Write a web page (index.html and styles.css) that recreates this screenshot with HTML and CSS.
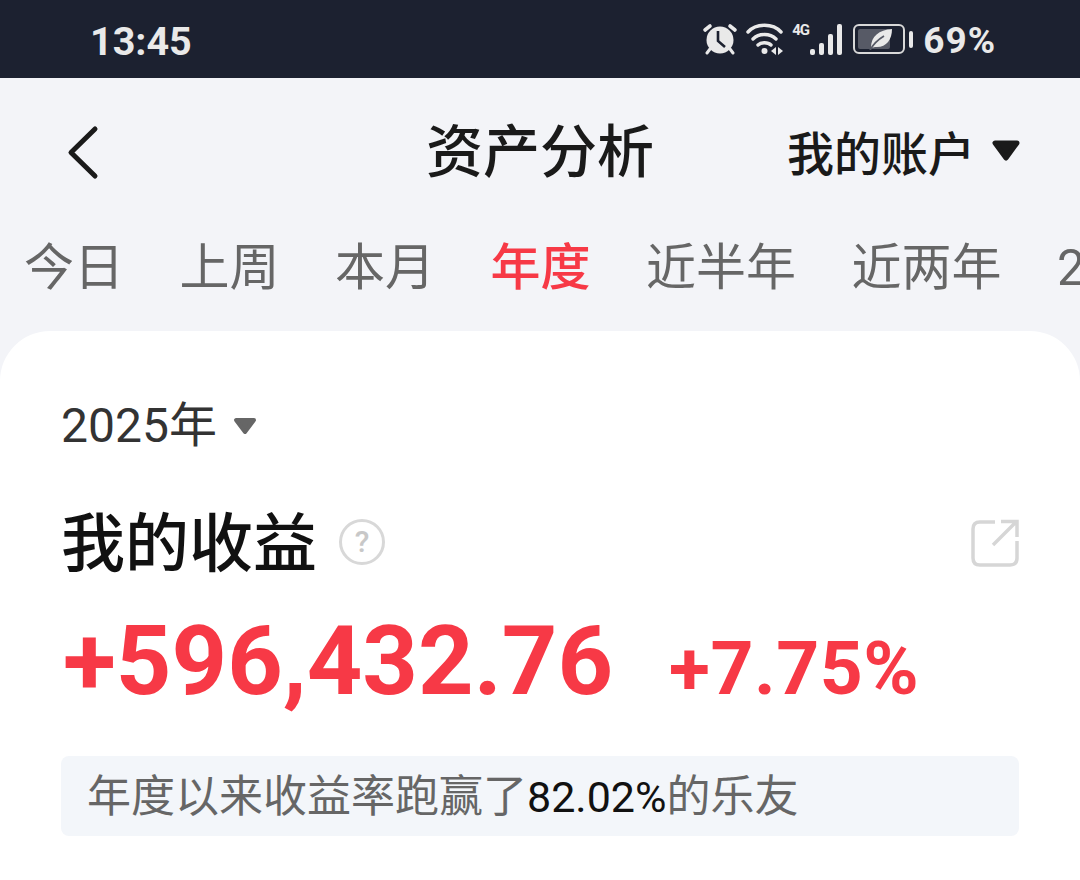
FILE: index.html
```html
<!DOCTYPE html>
<html lang="zh-CN">
<head>
  <meta charset="UTF-8">
  <meta name="viewport" content="width=device-width, initial-scale=1.0">
  <title>资产分析</title>
  <link rel="stylesheet" href="styles.css">
</head>
<body>
  <!-- Status bar -->
  <div class="status-bar">
    <span class="clock">13:45</span>
    <div class="status-icons">
      <svg class="icon-alarm" width="36" height="32" viewBox="0 0 36 32">
        <path d="M3 7 L8 3 M28 3 L33 7" stroke="#e9e9e9" stroke-width="3.600" stroke-linecap="round" fill="none"/>
        <path d="M8 26 L5 30 M28 26 L31 30" stroke="#e9e9e9" stroke-width="3" stroke-linecap="round" fill="none"/>
        <circle cx="18" cy="17" r="13.500" fill="#e9e9e9"/>
        <path d="M16 8 V18 L23 24" stroke="#1c2130" stroke-width="2.600" fill="none"/>
      </svg>
      <svg class="icon-wifi" width="40" height="34" viewBox="0 0 40 34">
        <path d="M2 10 C10 1 27 1 35 10 M7 17 C13 11 24 11 30 17 M12 23 C15 20 22 20 25 23" stroke="#e9e9e9" stroke-width="3.400" fill="none" stroke-linecap="round"/>
        <circle cx="18.500" cy="29" r="3" fill="#e9e9e9"/>
        <path d="M30 25 V33 L25 29 Z M32 25 V33 L37 29 Z" fill="#e9e9e9"/>
      </svg>
      <div class="signal">
        <span class="net-label">4G</span>
        <div class="signal-bars">
          <i class="bar-1"></i><i class="bar-2"></i><i class="bar-3"></i><i class="bar-4"></i>
        </div>
      </div>
      <div class="battery">
        <div class="battery-body">
          <div class="battery-level">
            <svg class="leaf" width="24" height="22" viewBox="0 0 24 22">
              <path d="M2 20 C2 8 10 2 23 1 C23 12 17 20 6 19 Z" fill="#e9e9e9"/>
              <path d="M1 22 C5 15 10 11 15 8" stroke="#575a66" stroke-width="1.800" fill="none"/>
            </svg>
          </div>
        </div>
        <div class="battery-cap"></div>
      </div>
      <span class="battery-text">69%</span>
    </div>
  </div>

  <div class="page">
    <!-- Nav -->
    <div class="nav">
      <svg class="back" width="36" height="58" viewBox="0 0 36 58">
        <path d="M31 5 L7 28.500 L31 52" stroke="#1a1a1a" stroke-width="5" stroke-linecap="round" stroke-linejoin="round" fill="none"/>
      </svg>
      <h1>资产分析</h1>
      <div class="account">
        <span>我的账户</span>
        <svg class="arrow-account" width="28" height="21" viewBox="0 0 28 21">
          <path d="M3 3 H25 L14 18 Z" fill="#1a1a1a" stroke="#1a1a1a" stroke-width="5" stroke-linejoin="round"/>
        </svg>
      </div>
    </div>

    <!-- Period tabs -->
    <div class="tabs">
      <span class="tab">今日</span>
      <span class="tab">上周</span>
      <span class="tab">本月</span>
      <span class="tab active">年度</span>
      <span class="tab">近半年</span>
      <span class="tab">近两年</span>
      <span class="tab">2024年</span>
    </div>

    <!-- Card -->
    <div class="card">
      <div class="year-select">
        <span>2025年</span>
        <svg class="arrow-year" width="24" height="18" viewBox="0 0 24 18">
          <path d="M3 3 H21 L12 15 Z" fill="#666" stroke="#666" stroke-width="4" stroke-linejoin="round"/>
        </svg>
      </div>
      <div class="title-row">
        <h2>我的收益</h2>
        <span class="help">?</span>
        <svg class="share" width="48" height="50" viewBox="0 0 48 50">
          <path d="M24 4 H9 Q2 4 2 11 V40 Q2 47 9 47 H39 Q46 47 46 40 V23" stroke="#d6d6d6" stroke-width="3.500" fill="none"/>
          <path d="M22 27 L45 4 M30 3.500 H46 V19" stroke="#d6d6d6" stroke-width="3.500" fill="none"/>
        </svg>
      </div>
      <div class="amount-row">
        <span class="amount">+596,432.76</span>
        <span class="percent">+7.75%</span>
      </div>
      <div class="note">年度以来收益率跑赢了<b>82.02%</b>的乐友</div>
    </div>
  </div>
</body>
</html>
```

FILE: styles.css
```css
:root {
  --bar-color: #1c2130;
  --page-bg: #f3f4f8;
  --red: #f73946;
  --icon-light: #e9e9e9;
}

html, body {
  margin: 0;
  padding: 0;
  height: 880px;
  overflow: hidden;
}

body {
  font-family: Roboto, "Noto Sans CJK SC", sans-serif;
  background-color: var(--page-bg);
  color: #1a1a1a;
}

/* Status bar */
.status-bar {
  height: 78px;
  box-sizing: border-box;
  background-color: var(--bar-color);
  color: var(--icon-light);
  display: flex;
  align-items: center;
  justify-content: space-between;
  padding: 0 84px 0 90px;
}

.clock {
  margin-top: 4px;
  font-size: 39.5px;
  font-weight: 700;
}

.status-icons {
  display: flex;
  align-items: center;
}

.icon-wifi {
  margin-left: 8px;
}

.signal {
  position: relative;
  width: 50px;
  height: 32px;
  margin-left: 6px;
}

.net-label {
  position: absolute;
  left: 0;
  top: -1px;
  font-size: 15px;
  line-height: 16px;
  font-weight: 700;
  letter-spacing: -1px;
}

.signal-bars {
  position: absolute;
  right: 0;
  bottom: 0;
  display: flex;
  align-items: flex-end;
  gap: 4px;
}

.signal-bars i {
  display: block;
  width: 5px;
  border-radius: 2px;
  background-color: var(--icon-light);
}

.bar-1 { height: 6px; }
.bar-2 { height: 12px; }
.bar-3 { height: 21px; }
.bar-4 { height: 31px; }

.battery {
  display: flex;
  align-items: center;
  margin-left: 11px;
}

.battery-body {
  width: 42px;
  height: 20px;
  padding: 3px;
  border: 2px solid #d8d8d8;
  border-radius: 6px;
}

.battery-level {
  width: 32px;
  height: 20px;
  border-radius: 2px;
  background-color: #575a66;
  position: relative;
}

.leaf {
  position: absolute;
  right: -3px;
  top: -1px;
}

.battery-cap {
  width: 4px;
  height: 17px;
  margin-left: 4px;
  border-radius: 2px;
  background-color: var(--icon-light);
}

.battery-text {
  margin-left: 10px;
  margin-top: 2px;
  font-size: 37px;
  font-weight: 700;
  letter-spacing: 1px;
}

/* Nav */
.nav {
  position: relative;
  height: 148px;
  box-sizing: border-box;
  padding-bottom: 10px;
  display: flex;
  align-items: center;
  justify-content: center;
}

.back {
  position: absolute;
  left: 64px;
  top: 46px;
}

.nav h1 {
  margin: 0;
  font-size: 57px;
  font-weight: 500;
}

.account {
  position: absolute;
  right: 60px;
  top: 38px;
  display: flex;
  align-items: center;
  font-size: 47px;
  font-weight: 500;
}

.arrow-account {
  margin-left: 17px;
}

/* Tabs */
.tabs {
  display: flex;
  gap: 55.5px;
  padding-left: 24px;
  white-space: nowrap;
  height: 105px;
  overflow: hidden;
  font-size: 50px;
  color: #666;
}

.tab {
  line-height: 84px;
  flex-shrink: 0;
}

.tab.active {
  color: var(--red);
  font-weight: 500;
}

/* Card */
.card {
  height: 549px;
  padding: 0 61px;
  background-color: #fff;
  border-radius: 50px 50px 0 0;
}

.year-select {
  display: flex;
  align-items: center;
  padding-top: 64px;
  font-size: 48px;
  line-height: 62px;
  color: #333;
}

.arrow-year {
  margin-left: 16px;
}

.title-row {
  display: flex;
  align-items: center;
  margin-top: 46px;
}

.title-row h2 {
  margin: 0;
  font-size: 64px;
  line-height: 84px;
  font-weight: 500;
  color: #111;
}

.help {
  width: 40px;
  height: 40px;
  margin-left: 22px;
  margin-top: -6px;
  border: 3px solid #d8d8d8;
  border-radius: 50%;
  color: #c8c8c8;
  font-size: 30px;
  font-weight: 500;
  line-height: 40px;
  text-align: center;
}

.share {
  margin-left: auto;
  margin-top: -4px;
}

.amount-row {
  display: flex;
  align-items: baseline;
  color: var(--red);
  font-weight: 700;
  margin-top: 19px;
  padding-left: 2px;
}

.amount {
  font-size: 97px;
  line-height: 110px;
}

.percent {
  margin-left: 56px;
  font-size: 75px;
  letter-spacing: 0.5px;
}

.note {
  margin-top: 40px;
  height: 80px;
  padding-left: 26px;
  border-radius: 8px;
  background-color: #f3f6fa;
  color: #666;
  font-size: 44px;
  line-height: 82px;
}

.note b {
  font-weight: 400;
  font-size: 43px;
  color: #111;
}
```
